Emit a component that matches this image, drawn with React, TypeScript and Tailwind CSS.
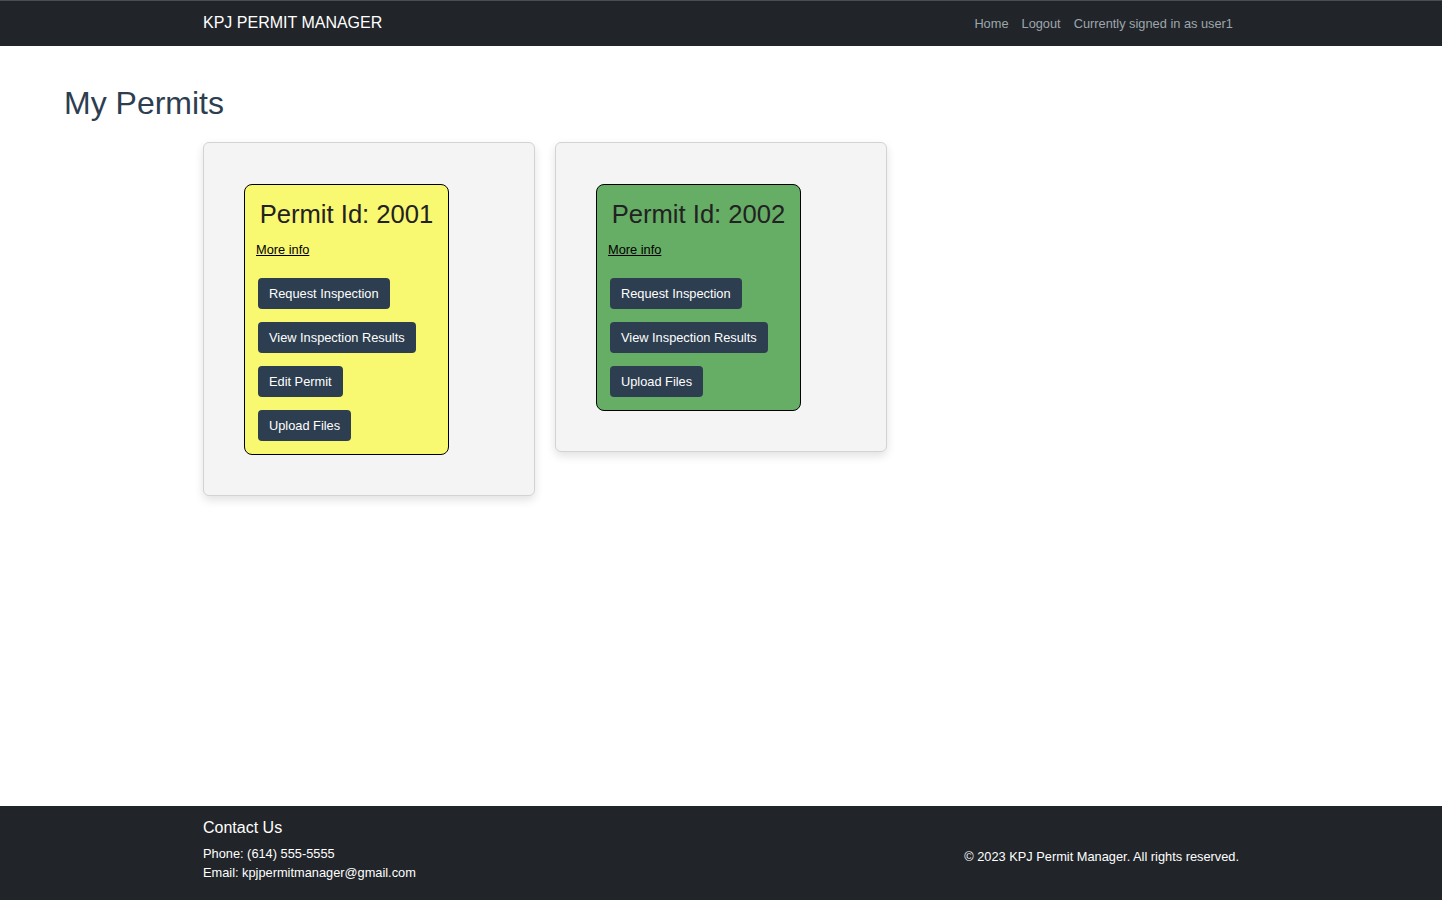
import React from "react";

type Permit = {
  id: number;
  color: string;
  actions: string[];
};

const permits: Permit[] = [
  {
    id: 2001,
    color: "bg-[#f9f871]",
    actions: ["Request Inspection", "View Inspection Results", "Edit Permit", "Upload Files"],
  },
  {
    id: 2002,
    color: "bg-[#66ae65]",
    actions: ["Request Inspection", "View Inspection Results", "Upload Files"],
  },
];

function PermitCard({ permit }: { permit: Permit }) {
  return (
    <div className="w-[332px] rounded-md border border-[#d3d3d3] bg-[#f4f4f4] px-[40px] pt-[41px] pb-[40px] shadow-[0_4px_10px_rgba(0,0,0,0.12)]">
      {/* inner coloured permit tile */}
      <div className={`w-[205px] rounded-lg border border-black ${permit.color} px-[11px] pt-[14px] pb-[13px]`}>
        <h2 className="text-center text-[25.6px] leading-[1.2] text-[#222]">Permit Id: {permit.id}</h2>
        <a href="#" className="mt-[12px] block text-[12.8px] leading-[15px] text-black underline">
          More info
        </a>
        <div className="mt-[21px] flex flex-col items-start gap-[13px] pl-[2px]">
          {permit.actions.map((label) => (
            <button
              key={label}
              className="flex h-[31px] items-center rounded bg-[#2d3e50] px-[11px] text-[12.8px] text-white"
            >
              {label}
            </button>
          ))}
        </div>
      </div>
    </div>
  );
}

export default function App() {
  return (
    <div className="flex min-h-screen flex-col bg-white font-['Liberation_Sans',Arial,sans-serif]">
      {/* Navbar */}
      <nav className="h-[46px] border-t border-[#4b4d50] bg-[#212529]">
        <div className="mx-[203px] flex h-full items-center justify-between">
          <span className="mb-[2px] text-[16px] text-white">KPJ PERMIT MANAGER</span>
          <div className="mr-[6px] flex items-center gap-[13px] text-[12.8px] text-[#9ea5ad]">
            <a href="#">Home</a>
            <a href="#">Logout</a>
            <span>Currently signed in as user1</span>
          </div>
        </div>
      </nav>

      <main className="flex-1">
        <h1 className="pl-[64px] pt-[38px] text-[32px] leading-[1.2] text-[#2c3e50]">My Permits</h1>
        <div className="ml-[203px] mt-[20px] flex items-start gap-[20px]">
          {permits.map((p) => (
            <PermitCard key={p.id} permit={p} />
          ))}
        </div>
      </main>

      {/* Footer */}
      <footer className="h-[94px] bg-[#212529] text-white">
        <div className="mx-[203px] flex justify-between">
          <div className="pt-[12px]">
            <h3 className="text-[16px] leading-[19px]">Contact Us</h3>
            <p className="mt-[7px] text-[12.8px] leading-[19px]">Phone: (614) 555-5555</p>
            <p className="text-[12.8px] leading-[19px]">Email: kpjpermitmanager@gmail.com</p>
          </div>
          <p className="pt-[43px] text-[12.8px] leading-[15px]">© 2023 KPJ Permit Manager. All rights reserved.</p>
        </div>
      </footer>
    </div>
  );
}
